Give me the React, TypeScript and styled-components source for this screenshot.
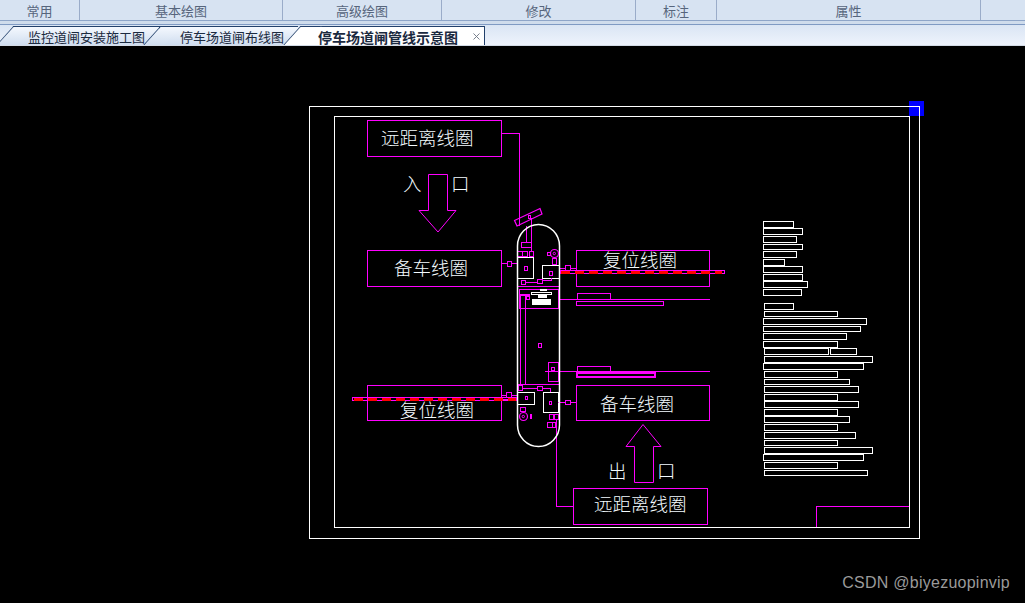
import React from "react";
import styled, { createGlobalStyle } from "styled-components";
import { X } from "lucide-react";

const Global = createGlobalStyle`
  html, body { margin: 0; padding: 0; background: #000; overflow: hidden; }
  #root { width: 1025px; height: 603px; }
`;

const Page = styled.div`
  position: relative;
  width: 1025px;
  height: 603px;
  display: flex;
  flex-direction: column;
  background: #000;
  font-family: "Noto Sans CJK SC", "Liberation Sans", sans-serif;
  overflow: hidden;
`;

const Ribbon = styled.div`
  display: flex;
  height: 20px;
  background: #d7e3f2;
  border-bottom: 1px solid #8ea5c8;
`;

const RibbonGroup = styled.div<{ $w: number }>`
  width: ${(p) => p.$w}px;
  box-sizing: border-box;
  border-right: 1px solid #9aacc9;
  display: flex;
  align-items: center;
  justify-content: center;
  font-size: 13px;
  line-height: 19px;
  color: #56657c;
`;

const RibbonRule = styled.div`
  height: 3px;
  background: #cfdcec;
  border-bottom: 1px solid #7f9ac3;
`;

const TabStrip = styled.div`
  display: flex;
  height: 21px;
  box-sizing: border-box;
  background: linear-gradient(#dae5f4, #eef3fc);
  border-bottom: 1px solid #d3dbe6;
  overflow: hidden;
`;

const Tab = styled.div<{ $active?: boolean; $ml: number; $w: number; $pl: number; $edge?: boolean }>`
  position: relative;
  box-sizing: border-box;
  margin-left: ${(p) => p.$ml}px;
  margin-top: 1px;
  width: ${(p) => p.$w}px;
  height: 20px;
  padding-left: ${(p) => p.$pl}px;
  display: flex;
  align-items: center;
  gap: 13px;
  border-top: 1px solid #22406b;
  border-right: ${(p) => (p.$edge ? "1px solid #22406b" : "none")};
  background: ${(p) => (p.$active ? "#fff" : "linear-gradient(#f4f8fe, #cddbee)")};
  color: #1b2a40;
  font-size: ${(p) => (p.$active ? 14 : 13)}px;
  font-weight: ${(p) => (p.$active ? 700 : 400)};
  white-space: nowrap;
  z-index: ${(p) => (p.$active ? 2 : 1)};

  &::before {
    content: "";
    position: absolute;
    left: -9px;
    top: -1px;
    width: 20px;
    height: 20px;
    border-top: 1px solid #22406b;
    border-left: 1px solid #22406b;
    background: ${(p) => (p.$active ? "#fff" : "linear-gradient(#f4f8fe, #cddbee)")};
    transform: skewX(-42deg);
    z-index: -1;
  }
`;

const TabLabel = styled.span`
  position: relative;
  line-height: 18px;
`;

const Close = styled(X)`
  color: #6d7683;
  flex: none;
  position: relative;
`;

const Canvas = styled.svg`
  display: block;
  width: 1025px;
  height: 557px;
  shape-rendering: crispEdges;
`;

const Outline = styled.rect<{ $c: string; $sw?: number }>`
  fill: none;
  stroke: ${(p) => p.$c};
  stroke-width: ${(p) => p.$sw ?? 1}px;
`;

const Wire = styled.path<{ $c: string; $sw?: number }>`
  fill: none;
  stroke: ${(p) => p.$c};
  stroke-width: ${(p) => p.$sw ?? 1}px;
`;

const RoundWire = styled(Wire)`
  shape-rendering: auto;
`;

const Solid = styled.rect<{ $c: string }>`
  fill: ${(p) => p.$c};
`;

const DashedCable = styled.line`
  stroke: #ff0000;
  stroke-width: 3px;
  stroke-dasharray: 9 5;
`;

const Label = styled.text`
  font-family: "Noto Sans CJK SC", "Liberation Sans", sans-serif;
  font-weight: 300;
  font-size: 18.5px;
  fill: #f4fbff;
  shape-rendering: auto;
`;

const Watermark = styled.div`
  position: absolute;
  right: 15px;
  bottom: 10px;
  font-family: "Liberation Sans", Arial, sans-serif;
  font-size: 16px;
  line-height: 20px;
  letter-spacing: 0.25px;
  color: #9a9a9a;
`;

const MAGENTA = "#ff00ff";
const WHITE = "#ffffff";

type B = [number, number, number, number];

const ribbon: [string, number][] = [
  ["常用", 80],
  ["基本绘图", 203],
  ["高级绘图", 159],
  ["修改", 194],
  ["标注", 81],
  ["属性", 264],
];

const legend: B[] = [
  [763, 221, 30, 6], [763, 228, 39, 6], [763, 236, 33, 6], [763, 244, 39, 5], [763, 251, 33, 6],
  [763, 259, 21, 6], [763, 266, 39, 6], [763, 274, 39, 6], [763, 281, 44, 6], [763, 289, 38, 6],
  [764, 303, 29, 6], [764, 311, 73, 5], [763, 318, 103, 6], [763, 326, 97, 5], [763, 333, 83, 6],
  [763, 341, 74, 6], [764, 348, 64, 6], [830, 348, 26, 6], [764, 356, 108, 6], [763, 363, 100, 6],
  [764, 371, 73, 6], [764, 379, 85, 5], [764, 386, 94, 6], [764, 394, 73, 6], [764, 401, 94, 6],
  [764, 409, 73, 6], [764, 416, 85, 6], [764, 424, 73, 6], [764, 432, 91, 6], [764, 440, 73, 5],
  [764, 447, 108, 6], [763, 454, 100, 6], [764, 462, 73, 6], [764, 470, 103, 5],
];

const whiteBoxes: B[] = [
  [309, 106, 610, 432], [334, 116, 575, 411],
  [517, 257, 16, 21], [542, 265, 17, 13], [517, 392, 17, 12], [543, 392, 15, 20],
];

const magentaBoxes: B[] = [
  [367, 120, 134, 36], [367, 250, 134, 36], [576, 250, 133, 36], [367, 385, 134, 35],
  [576, 385, 133, 35], [573, 488, 134, 36],
  [577, 293, 33, 6], [576, 301, 87, 4], [577, 366, 33, 5],
  // gate head, upper
  [521, 242, 10, 5], [526, 242, 0, 5], [517, 251, 5, 5], [522, 251, 5, 5], [529, 251, 4, 5],
  [524, 266, 3, 4], [549, 271, 3, 4], [507, 261, 4, 5], [547, 252, 3, 3], [552, 258, 4, 6],
  [565, 265, 5, 5], [521, 280, 4, 4], [537, 279, 5, 4], [517, 286, 42, 98], [519, 289, 39, 19],
  [526, 296, 3, 3], [538, 343, 3, 4],
  // gate, lower
  [548, 362, 10, 19], [551, 367, 3, 3], [518, 385, 4, 5], [537, 386, 5, 4], [525, 396, 2, 3],
  [549, 401, 2, 3], [565, 400, 5, 4], [506, 392, 5, 5], [520, 407, 5, 4], [530, 414, 1, 4],
  [549, 414, 4, 5], [554, 414, 4, 5], [547, 422, 5, 5], [552, 422, 3, 5], [528, 215, 2, 3],
];

const wires = [
  "M501.5 133.5H519.5V226",
  "M531.5 218V251M526.5 226V242",
  "M501 263.5H507M511 263.5H517",
  "M559 268.5H565M570 268.5H576",
  "M525 282.5H537M542 280.5H551.5V278",
  "M558 299.5H710M545 371.5H710",
  "M520.5 295V385M525.5 295V385",
  "M519 295.5H530",
  "M522 388.5H537M542 388.5H550.5V392",
  "M558 402.5H565M570 402.5H576",
  "M501 395.5H506M511 395.5H517M501 399.5H517",
  "M556.5 420V506.5H573",
  "M367 0",
  "M816.5 527V506.5H909",
];

export default function App() {
  return (
    <Page>
      <Global />
      <Ribbon>
        {ribbon.map(([t, w]) => (
          <RibbonGroup key={t} $w={w}>{t}</RibbonGroup>
        ))}
      </Ribbon>
      <RibbonRule />
      <TabStrip>
        <Tab $ml={13} $w={147} $pl={15} $edge>
          <TabLabel>监控道闸安装施工图</TabLabel>
        </Tab>
        <Tab $ml={0} $w={138} $pl={20}>
          <TabLabel>停车场道闸布线图</TabLabel>
        </Tab>
        <Tab $active $ml={2} $w={185} $pl={18} $edge>
          <TabLabel>停车场道闸管线示意图</TabLabel>
          <Close size={11} strokeWidth={2} />
        </Tab>
      </TabStrip>
      <Canvas viewBox="0 46 1025 557" xmlns="http://www.w3.org/2000/svg">
        <Solid $c="#0000ff" x={909} y={101} width={15} height={15} />
        {whiteBoxes.map(([x, y, w, h]) => (
          <Outline key={`w${x}-${y}`} $c={WHITE} x={x + 0.5} y={y + 0.5} width={w} height={h} />
        ))}
        {legend.map(([x, y, w, h]) => (
          <Outline key={`l${x}-${y}`} $c={WHITE} x={x + 0.5} y={y + 0.5} width={w} height={h} />
        ))}
        {magentaBoxes.map(([x, y, w, h]) => (
          <Outline key={`m${x}-${y}-${w}`} $c={MAGENTA} x={x + 0.5} y={y + 0.5} width={w} height={h} />
        ))}
        <Outline $c={MAGENTA} $sw={2} x={577} y={373} width={78} height={4} />
        {wires.map((d) => (
          <Wire key={d} $c={MAGENTA} d={d} />
        ))}
        <Wire $c={MAGENTA} $sw={2} d="M519 295H530" />

        {/* capsule */}
        <RoundWire
          $c={WHITE}
          $sw={1.5}
          d="M517.5 425V246A21 21.5 0 0 1 559.5 246V425A21 21.5 0 0 1 517.5 425Z"
        />

        {/* arrows */}
        <RoundWire $c={MAGENTA} d="M428.5 174.5H447.5V210.5H456L438 232L419 210.5H428.5Z" />
        <RoundWire $c={MAGENTA} d="M643 424.5L661 446.5H653.5V482.5H634.5V446.5H626Z" />

        {/* camera */}
        <RoundWire $c={MAGENTA} $sw={1.2} d="M514.5 220.5L540 208.5L542 214L517 226Z" />

        {/* barrier signal dots */}
        <RoundWire $c={MAGENTA} $sw={1.2} d="M558.5 253.5a4 4 0 1 0 -8 0a4 4 0 1 0 8 0Z" />
        <RoundWire $c={MAGENTA} d="M555.5 253.5a1.2 1.2 0 1 0 -2.4 0a1.2 1.2 0 1 0 2.4 0Z" />
        <RoundWire $c={MAGENTA} $sw={1.2} d="M527.5 416.5a4 4 0 1 0 -8 0a4 4 0 1 0 8 0Z" />
        <RoundWire $c={MAGENTA} d="M524.5 416.5a1.2 1.2 0 1 0 -2.4 0a1.2 1.2 0 1 0 2.4 0Z" />

        {/* barrier machine */}
        <Solid $c={WHITE} x={540} y={289} width={7} height={2} />
        <Outline $c={WHITE} x={531.5} y={292} width={20} height={2} />
        <Solid $c={WHITE} x={538} y={294} width={9} height={4} />
        <Solid $c={WHITE} x={532} y={299} width={19} height={6} />

        {/* induction cables */}
        <Outline $c={MAGENTA} x={560.5} y={270.5} width={164} height={3} />
        <DashedCable x1={561} y1={272} x2={722} y2={272} />
        <Outline $c={MAGENTA} x={352.5} y={397.5} width={164} height={3} />
        <DashedCable x1={354} y1={399} x2={516} y2={399} />

        <Label x={381} y={145}>远距离线圈</Label>
        <Label x={403} y={191}>入</Label>
        <Label x={451} y={191}>口</Label>
        <Label x={394} y={275}>备车线圈</Label>
        <Label x={603} y={267}>复位线圈</Label>
        <Label x={400} y={417}>复位线圈</Label>
        <Label x={600} y={411}>备车线圈</Label>
        <Label x={608} y={478}>出</Label>
        <Label x={657} y={478}>口</Label>
        <Label x={594} y={511}>远距离线圈</Label>
      </Canvas>
      <Watermark>CSDN @biyezuopinvip</Watermark>
    </Page>
  );
}
